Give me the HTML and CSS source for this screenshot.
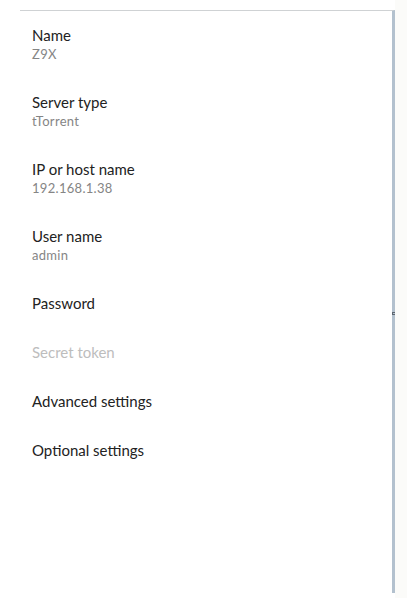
FILE: index.html
```html
<!DOCTYPE html>
<html>
<head>
<meta charset="utf-8">
<link rel="stylesheet" href="styles.css">
</head>
<body>
<div class="card">
  <div class="item"><div class="label">Name</div><div class="value">Z9X</div></div>
  <div class="item"><div class="label">Server type</div><div class="value">tTorrent</div></div>
  <div class="item"><div class="label">IP or host name</div><div class="value">192.168.1.38</div></div>
  <div class="item"><div class="label">User name</div><div class="value">admin</div></div>
  <div class="item"><div class="label">Password</div></div>
  <div class="item"><div class="label disabled">Secret token</div></div>
  <div class="item"><div class="label">Advanced settings</div></div>
  <div class="item"><div class="label">Optional settings</div></div>
  <span class="mark"></span>
</div>
</body>
</html>
```

FILE: styles.css
```css
html, body {
  margin: 0;
  padding: 0;
  background: #ffffff;
}
body {
  padding: 10px 12px 5px 20px;
  font-family: Lato, "Noto Sans", sans-serif;
  background: linear-gradient(to right, #ffffff 395px, #fbfbf9 395px);
}
.card {
  position: relative;
  background: #ffffff;
  border-top: 1px solid #cfd2d4;
  border-right: 3px solid #b3c1ce;
  height: 583px;
  box-sizing: border-box;
  padding-left: 12px;
}
.item {
  padding: 15px 0 16px;
}
.label {
  font-size: 15px;
  line-height: 18px;
  color: #222222;
}
.label.disabled {
  color: #bdbdbd;
}
.value {
  font-size: 13px;
  line-height: 18px;
  padding-top: 1px;
  margin-bottom: -1px;
  letter-spacing: 0.3px;
  color: #858585;
}
.mark {
  position: absolute;
  right: -3px;
  top: 301px;
  width: 3px;
  height: 3px;
  border: 1px solid #5d6670;
  border-right: none;
  box-sizing: border-box;
}
```
